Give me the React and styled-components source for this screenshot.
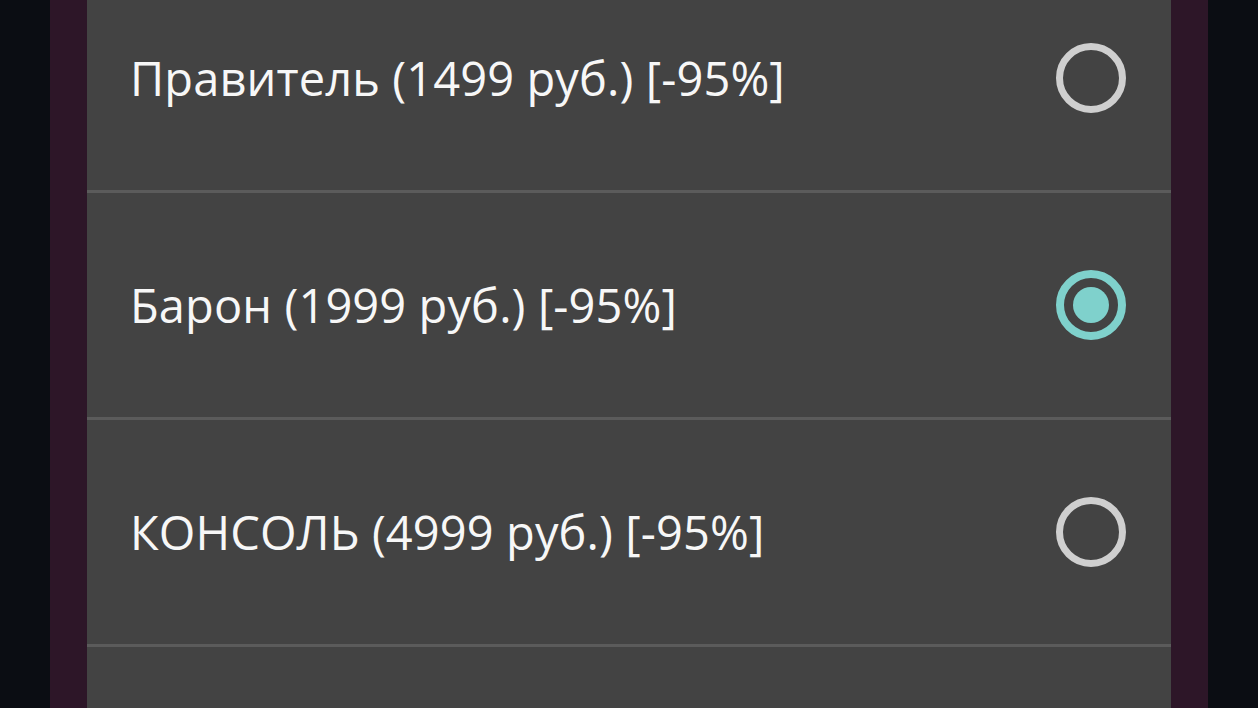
import React, { useState } from 'react';
import styled, { createGlobalStyle } from 'styled-components';

const GlobalStyle = createGlobalStyle`
  html, body {
    margin: 0;
    padding: 0;
    background: #0b0d13;
    overflow: hidden;
  }
`;

const Screen = styled.div`
  display: flex;
  justify-content: center;
  height: 708px;
  width: 1258px;
  overflow: hidden;
  background-color: #0b0d13;
  padding: 0 50px;
  box-sizing: border-box;
`;

const Frame = styled.div`
  flex: 1;
  display: flex;
  background-color: #2d1628;
  padding: 0 37px;
`;

const Sheet = styled.div`
  flex: 1;
  background-color: #434343;
  margin-top: -34px;
  display: flex;
  flex-direction: column;
`;

const Option = styled.label`
  display: flex;
  align-items: center;
  justify-content: space-between;
  height: 224px;
  flex-shrink: 0;
  padding: 0 45px 0 43px;
  border-bottom: 3px solid #5b5b5b;
  cursor: pointer;
`;

const Title = styled.span`
  font-family: 'Open Sans', 'Noto Sans', sans-serif;
  font-size: 47px;
  color: #f7f7f7;
  letter-spacing: 0.1px;
`;

const Radio = styled.span`
  width: 70px;
  height: 70px;
  box-sizing: border-box;
  border-radius: 50%;
  border: ${(p) => (p.checked ? '8px solid #7fd1cc' : '7px solid #cfcfcf')};
  display: flex;
  align-items: center;
  justify-content: center;
`;

const Dot = styled.span`
  width: 36px;
  height: 36px;
  border-radius: 50%;
  background-color: #7fd1cc;
`;

const plans = [
  'Правитель (1499 руб.) [-95%]',
  'Барон (1999 руб.) [-95%]',
  'КОНСОЛЬ (4999 руб.) [-95%]',
  '',
];

const App = () => {
  const [selected, setSelected] = useState(1);

  return (
    <Screen>
      <GlobalStyle />
      <Frame>
        <Sheet>
          {plans.map((name, i) => (
            <Option key={i} onClick={() => setSelected(i)}>
              <Title>{name}</Title>
              {name && (
                <Radio checked={selected === i}>
                  {selected === i && <Dot />}
                </Radio>
              )}
            </Option>
          ))}
        </Sheet>
      </Frame>
    </Screen>
  );
};

export default App;
